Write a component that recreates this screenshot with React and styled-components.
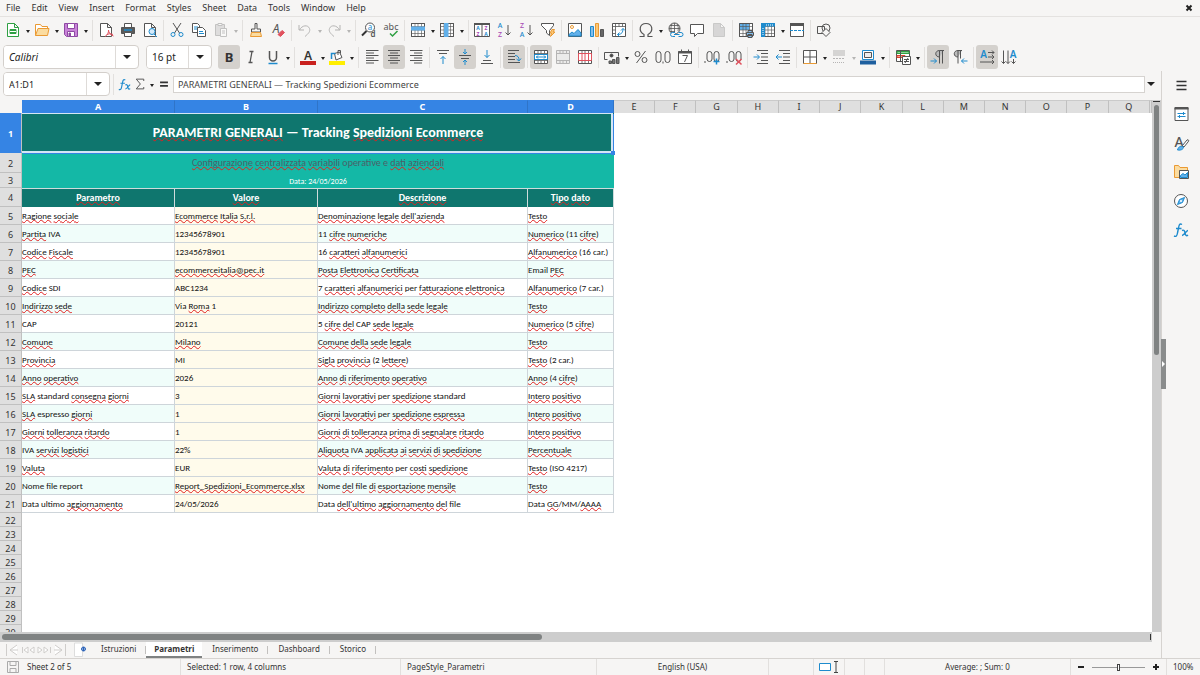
import React from "react";
import styled, { createGlobalStyle, css } from "styled-components";

const ui = '"Noto Sans", "Open Sans", sans-serif';
const cellFont = 'Carlito, Calibri, Lato, "Open Sans", sans-serif';
const BLUE = "#1e8bcd";
const INK = "#555";

const Global = createGlobalStyle`
  *, *::before, *::after { box-sizing: border-box; }
  html, body { margin: 0; }
  body { background: #f6f5f4; color: #333; font: 9px/12px ${ui}; }
  button, input { font: inherit; color: inherit; margin: 0; padding: 0; }
  button { background: none; border: 0; }
`;

const Shell = styled.div`
  display: flex;
  flex-direction: column;
  height: 100vh;
  overflow: hidden;
`;

/* ---------- menu bar ---------- */
const MenuBar = styled.nav`
  display: flex;
  align-items: center;
  flex: none;
  height: 17px;
  padding: 0 5px 0 6px;
  gap: 11px;
  border-bottom: 1px solid #e4e2e0;
`;
const MenuItem = styled.button`
  color: #333;
`;
const CloseButton = styled.button`
  display: flex;
  margin-left: auto;
`;

/* ---------- tool bars ---------- */
const ToolBar = styled.div`
  display: flex;
  align-items: center;
  flex: none;
  height: ${(p) => (p.$format ? 28 : 26)}px;
  padding-left: ${(p) => (p.$format ? 3 : 2)}px;
`;
const ToolButton = styled.button`
  display: flex;
  align-items: center;
  justify-content: center;
  flex: none;
  width: 22px;
  height: 24px;
  border-radius: 3px;
  color: ${INK};
  background: ${(p) => (p.$on ? "#d4d1cd" : "none")};
  opacity: ${(p) => (p.disabled ? 0.4 : 1)};
`;
const DropButton = styled.button`
  display: flex;
  align-items: center;
  justify-content: center;
  flex: none;
  width: ${(p) => p.$w || 7}px;
  height: 24px;
  opacity: ${(p) => (p.disabled ? 0.3 : 1)};
  &::after {
    content: "";
    margin-top: ${(p) => (p.$w ? 0 : 2)}px;
    border: ${(p) => (p.$w ? 4 : 2)}px solid transparent;
    border-top-color: #222;
    border-bottom: 0;
    ${(p) => !p.$w && css`border-top-width: 3px;`}
  }
`;
const Divider = styled.span`
  flex: none;
  width: 1px;
  height: 21px;
  margin: 0 2px;
  background: #e2e0de;
  ${DropButton} + & { margin-left: 3px; }
`;
const Combo = styled.div`
  display: flex;
  align-items: center;
  flex: none;
  width: ${(p) => p.$w}px;
  height: 24px;
  margin-right: ${(p) => p.$gap}px;
  background: #fff;
  border: 1px solid #d3cfcb;
  border-radius: 4px;
  overflow: hidden;
`;
const ComboInput = styled.input`
  flex: 1;
  min-width: 0;
  height: 22px;
  padding-left: 5px;
  border: 0;
  border-right: 1px solid #dedbd8;
  background: #fff;
  color: #222;
  font-size: ${(p) => p.$size || 10}px;
  font-style: ${(p) => (p.$italic ? "italic" : "normal")};
`;
const Svg = styled.svg`
  display: block;
  flex: none;
  overflow: visible;
`;

/* ---------- work area ---------- */
const Work = styled.div`
  display: flex;
  flex: 1;
  min-height: 0;
`;
const Main = styled.main`
  display: flex;
  flex-direction: column;
  flex: 1;
  min-width: 0;
`;
const FormulaBar = styled.div`
  display: flex;
  align-items: center;
  flex: none;
  height: 29px;
  padding: 0 4px 3px 3px;
`;
const SmallTool = styled(ToolButton)`
  width: ${(p) => p.$w}px;
`;
const FormulaInput = styled.input`
  flex: 1;
  min-width: 0;
  height: 17px;
  padding-left: 4px;
  border: 1px solid #d6d3d0;
  background: #fff;
  color: #444;
`;
const SheetArea = styled.div`
  display: flex;
  flex: 1;
  min-height: 0;
`;
const GridView = styled.div`
  flex: 1;
  min-width: 0;
  overflow: hidden;
  background: #fff;
`;
const Grid = styled.table`
  width: 100%;
  table-layout: fixed;
  border-collapse: separate;
  border-spacing: 0;
`;
const Col = styled.col`
  width: ${(p) => (p.$w ? p.$w + "px" : "auto")};
`;
const Corner = styled.td`
  background: #f6f5f4;
  padding: 0;
`;
const ColHead = styled.th`
  height: 13px;
  padding: 0;
  font-size: 9px;
  line-height: 12px;
  font-weight: ${(p) => (p.$on ? 700 : 400)};
  color: ${(p) => (p.$on ? "#fff" : "#333")};
  background: ${(p) => (p.$on ? "#3584e4" : "#dfdfdf")};
  border-right: 1px solid ${(p) => (p.$on ? "#2f74c8" : "#c0c0c0")};
  border-top: 1px solid ${(p) => (p.$on ? "#3584e4" : "#cacaca")};
`;
const RowHead = styled.th`
  height: ${(p) => p.$h}px;
  padding: 2px 0 0;
  font-size: 9px;
  line-height: 10px;
  font-weight: ${(p) => (p.$on ? 700 : 400)};
  color: ${(p) => (p.$on ? "#fff" : "#333")};
  background: ${(p) => (p.$on ? "#3584e4" : "#dfdfdf")};
  border-bottom: 1px solid ${(p) => (p.$on ? "#3584e4" : "#c0c0c0")};
  border-right: 1px solid #c0c0c0;
`;
const Banner = styled.td`
  position: relative;
  padding: 0;
  text-align: center;
  font-family: ${cellFont};
  color: ${(p) => p.$color || "#fff"};
  background: ${(p) => p.$bg};
  font-size: ${(p) => p.$size}px;
  line-height: 14px;
  font-weight: ${(p) => (p.$bold ? 700 : 400)};
`;
const Selection = styled.span`
  position: absolute;
  inset: 0 1px 0 0;
  border: 1px solid #d5e6f5;
  border-width: 1px 2px 2px 0;
  box-shadow: 1px 1px 0 #3584e4;
  z-index: 1;
  &::after {
    content: "";
    position: absolute;
    right: -4px;
    bottom: -4px;
    width: 4px;
    height: 4px;
    background: #3584e4;
  }
`;
const HeadCell = styled.td`
  padding: 0;
  text-align: center;
  font: 700 10px/12px ${cellFont};
  color: #fff;
  background: #0f766e;
  border-right: 1px solid #cfdcdc;
  border-top: 1px solid #cfdcdc;
`;
const Cell = styled.td`
  padding: 0;
  font: 9px/12px ${cellFont};
  color: #111;
  white-space: nowrap;
  background: ${(p) => (p.$input ? "#fffbeb" : p.$band ? "#f0fdfa" : "#fff")};
  border-right: 1px solid #ced5da;
  border-bottom: 1px solid #ced5da;
`;
const Blank = styled.td`
  padding: 0;
`;
const Spell = styled.span`
  text-decoration: underline wavy #e02020 1px;
  text-decoration-skip-ink: none;
  text-underline-offset: 0;
`;
const VScroll = styled.div`
  display: flex;
  flex-direction: column;
  align-items: center;
  flex: none;
  width: 9px;
  background: #cdcdcd;
  border-top: 1px solid #cdcdcd;
  &::before {
    content: "";
    width: 7px;
    height: 1px;
    margin-bottom: 3px;
    background: #333;
  }
`;
const VThumb = styled.span`
  width: 5px;
  height: 47%;
  border-radius: 3px;
  background: #7f8282;
`;
const HScroll = styled.div`
  display: flex;
  align-items: center;
  justify-content: space-between;
  flex: none;
  height: 10px;
  margin-right: 9px;
  padding: 0 1px 0 2px;
  background: #cdcdcd;
  &::after {
    content: "";
    width: 1px;
    height: 6px;
    background: #333;
  }
`;
const HThumb = styled.span`
  width: 47%;
  height: 6px;
  border-radius: 3px;
  background: #7f8282;
`;

/* ---------- sheet tabs ---------- */
const Tabs = styled.nav`
  display: flex;
  flex: none;
  height: 16px;
`;
const TabTools = styled.div`
  display: flex;
  align-items: center;
  justify-content: space-between;
  width: 91px;
  padding: 0 0 0 6px;
`;
const AddSheet = styled(ToolButton)`
  height: 16px;
`;
const Tab = styled.button`
  position: relative;
  padding: 0 10px;
  height: 16px;
  font-size: 8px;
  line-height: 14px;
  font-weight: ${(p) => (p.$on ? 700 : 400)};
  background: ${(p) => (p.$on ? "#fff" : "none")};
  border-bottom: 2px solid ${(p) => (p.$on ? "#7f8282" : "transparent")};
  ${(p) => p.$on && css`padding: 0 8px;`}
  &::after {
    content: "";
    position: absolute;
    right: 0;
    top: 4px;
    width: 1px;
    height: 8px;
    background: ${(p) => (p.$on ? "none" : "#c2c0be")};
  }
`;

/* ---------- side bar ---------- */
const SideBar = styled.aside`
  position: relative;
  display: flex;
  flex-direction: column;
  align-items: center;
  flex: none;
  width: 39px;
  padding-top: 2px;
  gap: 5px;
  border-left: 1px solid #d6d3d0;
`;
const Splitter = styled.button`
  position: absolute;
  left: -1px;
  top: calc(50% - 26px);
  display: flex;
  align-items: center;
  width: 5px;
  height: 50px;
  background: #8a8c8c;
  &::after {
    content: "";
    border: 3px solid transparent;
    border-left: 3px solid #fff;
    border-right: 0;
    margin-left: 1px;
  }
`;

/* ---------- status bar ---------- */
const StatusBar = styled.footer`
  display: grid;
  grid-template-columns:
    minmax(0, 181fr) minmax(0, 220fr) minmax(0, 196fr) minmax(0, 172fr) minmax(0, 45fr) minmax(0, 31fr)
    minmax(0, 20fr) minmax(0, 20fr) minmax(0, 186fr) minmax(0, 96fr) minmax(0, 33fr);
  flex: none;
  height: 17px;
  border-top: 1px solid #d6d3d0;
  font-size: 8px;
`;
const Status = styled.div`
  display: flex;
  align-items: center;
  justify-content: ${(p) => (p.$center ? "center" : "flex-start")};
  min-width: 0;
  gap: 7px;
  padding: 0 6px;
  border-right: 1px solid #e2e0de;
  white-space: nowrap;
  &:last-child { border: 0; }
`;
const Zoom = styled.input`
  appearance: none;
  flex: 1;
  min-width: 0;
  height: 10px;
  background: linear-gradient(#999, #999) center / 100% 1px no-repeat;
  &::-webkit-slider-thumb {
    appearance: none;
    width: 3px;
    height: 7px;
    border: 1px solid #444;
    background: #fff;
  }
`;

/* ---------- drawings ---------- */
const lines = (ys, x1 = 1.5, x2 = 14.5) => ys.map((y, i) => <path key={i} d={`M${x1} ${y}H${x2}`} />);
const sheetPath = "M2.5 1.5h7l4 4v9h-11zM9.5 1.5v4h4";
const gridInner = "M1.5 4.5h13M1.5 8h13M1.5 11.5h13M5 1.5v13M8 1.5v13M11.5 1.5v13";
const Lattice = () => (
  <g>
    <path strokeWidth=".8" opacity=".8" d={gridInner} />
    <path d="M1.5 1.5h13v13h-13z" />
  </g>
);
const T = ({ x, y, s = 9, f = "currentColor", w = 400, children, ...r }) => (
  <text x={x} y={y} fontSize={s} fontWeight={w} fill={f} stroke="none" textAnchor="middle" fontFamily={ui} {...r}>
    {children}
  </text>
);

const art = {
  new: (
    <g stroke="#2fa043">
      <path fill="#fff" d={sheetPath} />
      <path fill="#2fa043" d="M5 7.5h6v4H5z" />
      <path stroke="#fff" d="M5 9.5h6" />
    </g>
  ),
  open: (
    <g stroke="#ea9a33">
      <path fill="#fff" d="M1.5 13.5v-11h5l1.500 2h5.500v2" />
      <path fill="#fbdca0" d="M1.500 13.500l2.500-7h11l-1.500 7z" />
    </g>
  ),
  save: (
    <g stroke="#8e49a3">
      <path fill="#c983d8" d="M1.500 1.500h13v13h-11l-2-2z" />
      <path fill="#fff" d="M4.500 1.500h7v5h-7z" />
      <path fill="#fff" d="M4.500 9.500h7v5h-7z" />
      <path fill="#8e49a3" d="M6 11h1.500v3.500H6z" />
    </g>
  ),
  pdf: (
    <g>
      <path fill="#fff" d={sheetPath} />
      <path stroke="#e0525e" d="M7 14.500c2-1 4-4 3.500-6.500 0 2.500 2 5 5 6M8.500 13c2-1.500 4-1.500 6.500-.500" />
    </g>
  ),
  print: (
    <g>
      <path fill="#fff" d="M4.500 5v-3.500h7V5" />
      <path fill="#5a5a5a" d="M1.500 5.500h13v6h-13z" />
      <path stroke={BLUE} strokeWidth="1.500" d="M4 8h8" />
      <path fill="#fff" d="M4.500 10.500h7v4h-7z" />
    </g>
  ),
  preview: (
    <g>
      <path fill="#fff" d={sheetPath} />
      <circle cx="10" cy="9.500" r="3" fill="#d5eafa" stroke={BLUE} />
      <path stroke={BLUE} d="M12 12l3 3" />
    </g>
  ),
  cut: (
    <g>
      <path d="M4 1l6.500 10M12 1L5.500 11" />
      <circle cx="4" cy="12.500" r="2" stroke={BLUE} />
      <circle cx="12" cy="12.500" r="2" stroke={BLUE} />
    </g>
  ),
  copy: (
    <g>
      <path fill="#fff" d="M1.500 1.500h5l2 2v7h-7z" />
      <path stroke={BLUE} d="M3 5h4M3 7h4" />
      <path fill="#fff" d="M6.500 5.500h5l3 3v6h-8z" />
      <path stroke={BLUE} d="M8 9.500h4M8 11.500h5" />
    </g>
  ),
  paste: (
    <g stroke="#777">
      <path fill="#bbb" d="M2.500 2.500h9v11h-9z" />
      <path fill="#fff" d="M5 1.500h4v2H5zM7.500 6.500h6v8h-6z" />
      <path d="M9 9h3M9 11h3" />
    </g>
  ),
  clone: (
    <g>
      <path d="M7 1.500h2v5.500h3.500v3h-9V7H7z" />
      <path stroke="#ea9a33" fill="#fbdca0" d="M3.500 10.500h9l1 4h-11z" />
    </g>
  ),
  clear: (
    <g>
      <T x={6} y={11} s={12} fontStyle="italic">A</T>
      <path stroke="#e0525e" fill="#e0525e" d="M8 12.500l4-4 2.500 2-4 4z" />
    </g>
  ),
  undo: <path d="M2 3v5h5M2.500 8C5 3 11 2.500 12.500 6.500c1 3-1 5-4.500 8" />,
  redo: <path d="M14 3v5H9M13.500 8C11 3 5 2.500 3.500 6.500c-1 3 1 5 4.500 8" />,
  find: (
    <g>
      <circle cx="9" cy="5.500" r="4.500" fill="#fff" />
      <path stroke="#333" strokeWidth="2" d="M5.500 9L1 13.500" />
      <T x={9} y={8} s={8} f={BLUE}>a</T>
      <T x={12} y={15} s={8} w={600}>d</T>
    </g>
  ),
  spell: (
    <g>
      <T x={8} y={7.500} s={9}>abc</T>
      <path stroke="#2fa043" strokeWidth="1.500" d="M7 11.500l2.500 2.500 5-5" />
    </g>
  ),
  row: (
    <g>
      <path fill="#fff" d="M1.500 1.500h13v13h-13z" />
      <Lattice />
      <path stroke="none" fill="#62b0ea" d="M1 4.500h14v4H1z" />
    </g>
  ),
  column: (
    <g>
      <path fill="#fff" d="M1.500 1.500h13v13h-13z" />
      <Lattice />
      <path stroke="none" fill="#62b0ea" d="M5 1h4.500v14H5z" />
    </g>
  ),
  sort: (
    <g>
      <path fill="#fff" d="M.5 1.500h15v13H.500zM8 1.500v13" />
      <path strokeWidth="2" d="M0 2h16" />
      <T x={4} y={8} s={5} w={700} f={BLUE}>A</T>
      <T x={4} y={14} s={5} w={700} f="#a74bb5">Z</T>
      <T x={12} y={8} s={5} w={700} f="#a74bb5">Z</T>
      <T x={12} y={14} s={5} w={700} f={BLUE}>A</T>
    </g>
  ),
  sortUp: (
    <g>
      <T x={4} y={6} s={7} w={500} f={BLUE}>A</T>
      <T x={4} y={15} s={7} w={500} f="#a74bb5">Z</T>
      <path d="M12 3v10M9.500 10.500l2.500 2.500 2.500-2.500" />
    </g>
  ),
  sortDown: (
    <g>
      <T x={4} y={6} s={7} w={500} f="#a74bb5">Z</T>
      <T x={4} y={15} s={7} w={500} f={BLUE}>A</T>
      <path d="M12 3v10M9.500 10.500l2.500 2.500 2.500-2.500" />
    </g>
  ),
  filter: (
    <g>
      <path fill="#fff" d="M1.500 1.500h12v2L9.500 8.500v5l-3-2.500V8.500l-5-5z" />
      <path stroke="#ea9a33" fill="#fbc878" d="M12 7.500h2.500l-1.500 2.500h2l-4.500 4.500 1-3.500h-1.500z" />
    </g>
  ),
  image: (
    <g>
      <path fill="#fff" d="M1.500 1.500h13v13h-13z" />
      <circle cx="5" cy="5" r="1.500" stroke="#ea9a33" />
      <path stroke={BLUE} fill="#62b0ea" d="M2 12.500l3-2.500 2 1.500 4-4 3 3.500v3H2z" />
    </g>
  ),
  chart: (
    <g>
      <path stroke={BLUE} fill="#83beec" d="M1.500 4.500h3v10h-3z" />
      <path stroke="#ea9a33" fill="#fbc878" d="M6.500 1.500h3v13h-3z" />
      <path fill="#666" d="M11.500 7.500h3v7h-3z" />
    </g>
  ),
  pivot: (
    <g>
      <path fill="#fff" d="M1.500 1.500h13v13h-13z" />
      <path strokeWidth=".8" d="M1.500 4.500h13M4.500 1.500v13M8 1.500v3M11.500 1.500v3M1.500 8h3M1.500 11.500h3" />
      <path stroke={BLUE} d="M6.500 12.500C11 12.500 12 10 12 6.500M8.500 10.500l-2 2 2 2M10 8.500l2-2 2 2" />
    </g>
  ),
  omega: <path strokeWidth="1.200" d="M1.500 14.500h4.500v-2C0 9 1.500 1.500 8 1.500S16 9 10 12.500v2h4.500" />,
  link: (
    <g>
      <circle cx="7.500" cy="6.500" r="5.500" />
      <path strokeWidth=".8" d="M2 6.500h11M7.500 1v11M3 3.500h9M3 9.500h5M5 2c-1.500 3-1.500 6 0 9M10 2c1.500 2 1.500 5 1 7" />
      <path stroke={BLUE} fill="#f6f5f4" d="M8 10.500H5.500a2 2 0 0 0 0 4H8M11.500 10.500H14a2 2 0 0 1 0 4h-2.500M7 12.500h5.500" />
    </g>
  ),
  comment: <path fill="#fff" d="M1.500 2.500h13v9h-6l-3 3v-3h-4z" />,
  page: <path fill="#aaa" stroke="#888" d={sheetPath} />,
  printArea: (
    <g>
      <path fill="#fff" d="M1.500 1.500h13v13h-13z" />
      <path stroke="none" fill="#62b0ea" d="M1 1h10.500v7H1z" />
      <Lattice />
      <path fill="#83beec" d="M8.500 10.500h7v3h-7zM10 8.500h4v2h-4zM10 12.500h4v3h-4z" />
    </g>
  ),
  freeze: (
    <g>
      <path fill="#fff" d="M1.500 1.500h13v13h-13z" />
      <Lattice />
      <path stroke="none" fill={BLUE} d="M1 1h4v14H1zM1 1h14v3.500H1z" />
      <path stroke="#fff" d="M3 6v8M6 3h8" strokeDasharray="1 1" />
    </g>
  ),
  split: (
    <g>
      <path fill="#fff" d="M1.500 1.500h13v13h-13z" />
      <path strokeWidth="3" d="M1 2.500h14" />
      <path stroke={BLUE} strokeDasharray="3 1" d="M1 8.500h14" />
    </g>
  ),
  shapes: (
    <g>
      <path d="M1.500 4.500h7v7h-7z" />
      <circle cx="10" cy="6" r="4" />
      <path fill="#f6f5f4" d="M10 6.500l4 4-4 4-4-4z" />
    </g>
  ),
  bold: <T x={8} y={12.500} s={13} w={700} f="#333">B</T>,
  italic: <path strokeWidth="1.300" d="M6.500 2.500h4M5.500 13.500h4M9 2.500l-2 11" />,
  underline: (
    <g>
      <path strokeWidth="1.500" d="M4.500 2v6.500a3.500 3.500 0 0 0 7 0V2" />
      <path stroke={BLUE} strokeWidth="1.500" d="M3.500 14.500h9" />
    </g>
  ),
  fontColor: (
    <g>
      <T x={8} y={11} s={12} w={600} f="#333">A</T>
      <path stroke="#c9211e" strokeWidth="4" d="M0 14h16" />
    </g>
  ),
  highlight: (
    <g>
      <path fill="#fff" d="M5.500 4.500l5-1.500 2.500 5.500-6 2.500z" />
      <path stroke={BLUE} strokeWidth="1.500" d="M2.500 10V4.500h4" />
      <path d="M9 6V1.500h2.500v3" />
      <path stroke="#ffee00" strokeWidth="4" d="M0 14h16" />
    </g>
  ),
  left: <g>{lines([1.5, 6.5, 11.5], 2)}{lines([4, 9, 14], 2, 10)}</g>,
  center: <g>{lines([1.5, 6.5, 11.5], 2, 14)}{lines([4, 9, 14], 4, 12)}</g>,
  right: <g>{lines([1.5, 6.5, 11.5], 2)}{lines([4, 9, 14], 6, 14)}</g>,
  top: (
    <g>
      <path d="M2 1.500h12M4 4.500h8" />
      <path stroke={BLUE} d="M8 15V7.500M5.500 10L8 7.500l2.500 2.500" />
    </g>
  ),
  middle: (
    <g>
      <path d="M2 6.500h12M4 9.500h8" />
      <path stroke={BLUE} d="M8 0v5M6 3l2 2 2-2M8 16v-5M6 13l2-2 2 2" />
    </g>
  ),
  bottom: (
    <g>
      <path d="M4 11.500h8M2 14.500h12" />
      <path stroke={BLUE} d="M8 1v7.500M5.500 6L8 8.500 10.500 6" />
    </g>
  ),
  wrap: (
    <g>
      <path d="M2 1.500h11M2 4.500h7M2 7.500h7M2 10.500h7M2 13.500h12" />
      <path stroke={BLUE} d="M9 6.500c3 0 4 2 4 4.500M10.500 10l2.500 2 2-2.500" />
    </g>
  ),
  merge: (
    <g>
      <path fill="#fff" d="M1.500 1.500h13v13h-13z" />
      <path strokeWidth=".8" d="M1.500 4.500h13M1.500 11.500h13M5 1.500v3M8 1.500v3M11.500 1.500v3M5 11.500v3M8 11.500v3M11.500 11.500v3" />
      <path stroke={BLUE} d="M1.500 5.500h13v5h-13zM3 8h10M5 6.500L3.500 8 5 9.500M11 6.500L12.500 8 11 9.500" />
    </g>
  ),
  mergeOff: <g><path fill="#ddd" d="M1.500 1.500h13v13h-13z" /><path d="M1.500 4.500h13M1.500 11.500h13M5 1.500v3M8 1.500v3M11.500 1.500v3M5 11.500v3M8 11.500v3M11.500 11.500v3" /></g>,
  splitCells: (
    <g>
      <path fill="#fff" d="M1.500 1.500h13v13h-13z" />
      <path strokeWidth=".8" d="M5 1.500v3M8 1.500v3M11.500 1.500v3M5 11.500v3M8 11.500v3M11.500 11.500v3" />
      <path stroke="#e0525e" d="M1.500 4.500h13v7h-13zM5 4.500v7M8 4.500v7M11.500 4.500v7" />
    </g>
  ),
  currency: (
    <g>
      <path d="M3.500 10.500h-3v-7h14v4" />
      <circle cx="7.500" cy="6.500" r="1.500" fill="#444" />
      <path fill="#777" d="M5 12h2.500v2.500H5zM8.500 10.500h2.500v4H8.500zM12.500 8.500h2.500v6h-2.500z" />
    </g>
  ),
  percent: (
    <g>
      <circle cx="4.500" cy="5" r="2.500" />
      <circle cx="11.500" cy="11" r="2.500" />
      <path d="M12.500 2L3.500 14" />
    </g>
  ),
  number: (
    <g>
      <rect x="1" y="2.500" width="5" height="11" rx="2.500" />
      <rect x="10" y="2.500" width="5" height="11" rx="2.500" />
      <path d="M8 12.500v2" />
    </g>
  ),
  date: (
    <g>
      <path fill="#fff" d="M1.500 2.500h13v12h-13z" />
      <path strokeWidth="2" d="M1 3.500h14" />
      <path d="M4.500.5v2M11.500.5v2M5.500 6.500h5L7.500 13" />
    </g>
  ),
  decAdd: (
    <g>
      <path d="M1 12v2" />
      <rect x="3" y="2.500" width="5" height="10" rx="2.500" />
      <rect x="10" y="2.500" width="5" height="10" rx="2.500" />
      <path stroke={BLUE} strokeWidth="1.500" d="M12.500 9.500v6M9.500 12.500h6" />
    </g>
  ),
  decDel: (
    <g>
      <path d="M1 12v2" />
      <rect x="3" y="2.500" width="5" height="10" rx="2.500" />
      <rect x="10" y="2.500" width="5" height="10" rx="2.500" />
      <path stroke="#e0525e" strokeWidth="1.500" d="M10 10l5.500 5.500M15.500 10L10 15.500" />
    </g>
  ),
  indent: (
    <g>
      <path d="M4 1.500h11M8 4.500h7M8 8h7M8 11.500h7M4 14.500h11" />
      <path stroke={BLUE} d="M.5 8H6M4 5.500L6.500 8 4 10.500" />
    </g>
  ),
  outdent: (
    <g>
      <path d="M4 1.500h11M8 4.500h7M8 8h7M8 11.500h7M4 14.500h11" />
      <path stroke={BLUE} d="M7 8H1M3.500 5.500L1 8l2.500 2.500" />
    </g>
  ),
  borders: (
    <g>
      <path fill="#fff" d="M1.500 1.500h13v13h-13z" />
      <path d="M8 1.500v13M1.500 8h13" />
      <path stroke="#ea9a33" d="M1.500 14.500h13" />
    </g>
  ),
  lineStyle: (
    <g>
      <path d="M2 2h12M2 6h12M2 4h12" />
      <path strokeDasharray="2 1" d="M2 9.500h12" />
      <path strokeDasharray="1 1" d="M2 13.500h12" />
    </g>
  ),
  borderColor: (
    <g>
      <path stroke={BLUE} fill="#fff" d="M2.500 1.500h11v9h-11z" />
      <path fill="#eee" d="M4.500 3.500h7v5h-7z" />
      <path stroke="#1e5f9f" strokeWidth="4" d="M0 13.500h16" />
    </g>
  ),
  conditional: (
    <g>
      <path fill="#fff" d="M1.500 1.500h13v11h-13z" />
      <path stroke="#2fa043" fill="#8ed09a" d="M2 2.500h12v2H2z" />
      <path stroke="#d9432f" fill="#f2998d" d="M2 6.500h8v2H2z" />
      <path d="M5.500 1.500v11" />
      <path fill="#fff" d="M7.500 7.500h8v8h-8zM9 10.500h5M9 12.500h5M13 9l-3 5" />
    </g>
  ),
  ltr: (
    <g>
      <path fill="#bbb" d="M9.500 8c-5 0-5-6.500 0-6.500H14M9.500 1.500v13M12.500 1.500v13" />
      <path stroke={BLUE} d="M.5 12h6M4 9.500L6.500 12 4 14.500" />
    </g>
  ),
  rtl: (
    <g>
      <path fill="#bbb" d="M6 8c-5 0-5-6.500 0-6.500h4M6 1.500v13M8.500 1.500v8" />
      <path stroke={BLUE} d="M15.500 12h-6M12 9.500L9.500 12l2.500 2.500" />
    </g>
  ),
  textH: (
    <g>
      <T x={4.500} y={9} s={10} f={BLUE} w={600}>A</T>
      <path d="M9 3.500h6M13 1.500l2 2-2 2M9 8h6M13 6l2 2-2 2M1 13h14M13 11l2 2-2 2" />
    </g>
  ),
  textV: (
    <g>
      <path d="M2.500 1.500v13M.5 12.500l2 2 2-2M7 1.500v13M5 12.500l2 2 2-2M12.500 10v4.500M10.500 12.500l2 2 2-2" />
      <T x={12} y={9} s={10} f={BLUE} w={600}>A</T>
    </g>
  ),
  fx: (
    <g stroke={BLUE} strokeWidth="1.400">
      <path d="M9 2.500C6.500 1 6 3 5.500 6l-1 5c-.5 3-1.500 4-3.500 3M3 6.500h5.500" />
      <path d="M9 8.500c2-1 2.500 0 3 2.500s1.500 3.500 3 2M15 8.500c-2 0-3.500 5-6 5" />
    </g>
  ),
  sigma: <path strokeWidth="1.300" d="M13 4V1.500H3L8.500 8 3 14.500h10V12" />,
  equals: <path stroke="#333" strokeWidth="2" d="M3.500 6h9M3.500 10h9" />,
  burger: <path stroke="#333" strokeWidth="1.500" d="M3.500 4.500h10M3.500 8.500h10M3.500 12.500h10" />,
  props: (
    <g>
      <path fill="#fff" d="M2 1.500h13v13H2z" />
      <path strokeWidth="2" d="M1.500 2.500h14" />
      <path stroke={BLUE} d="M4.500 7.500h8M4.500 10.500h8M10.500 6v3M6.500 9v3" />
    </g>
  ),
  styles: (
    <g>
      <T x={6} y={12} s={14} w={500}>A</T>
      <path fill="#fff" d="M9.500 10.500L14 5c2-1 2 1 1 2l-4 5z" />
      <path stroke={BLUE} fill="#62b0ea" d="M4.500 15c1-4 4-4.500 6-3 0 2.500-3 3.500-6 3z" />
    </g>
  ),
  gallery: (
    <g>
      <path stroke="#ea9a33" fill="#fbdca0" d="M1.500 13.500v-12h4l1.500 2h7.500v3h-8v7z" />
      <path fill="#fff" d="M6.500 6.500h9v8h-9z" />
      <path stroke={BLUE} fill="#62b0ea" d="M7.500 13.500v-2l2.500-2 2 1.500 2.500-2.500v5z" />
    </g>
  ),
  navigator: (
    <g>
      <circle cx="8" cy="8" r="6.500" fill="#fff" />
      <path stroke={BLUE} fill="#62b0ea" d="M11.500 4.500l-2 5-5 2 2-5z" />
      <circle cx="8" cy="8" r="1" fill="#fff" stroke="none" />
    </g>
  ),
};

const Icon = ({ name, size = 16 }) => (
  <Svg width={size} height={size} viewBox="0 0 16 16" fill="none" stroke="currentColor" aria-hidden="true">
    {art[name]}
  </Svg>
);

/* flags after the colon: "v" adds a drop-down arrow, "!" marks a pressed tool, "-" a disabled one; "|" is a divider */
const standardTools =
  "new:v open:v save:v | pdf print preview | cut copy paste:-v | clone clear | undo:-v redo:-v | find spell | row:v column:v | sort sortUp sortDown filter | image chart pivot | omega:v link comment page:- | printArea freeze:v split | shapes";
const formatTools =
  "bold:! italic underline:v | fontColor:v highlight:v | left center:! right | top middle:! bottom | wrap:! | merge:! mergeOff:- splitCells | currency:v percent number date | decAdd decDel | indent outdent | borders:v lineStyle:-v borderColor:v | conditional:v | ltr:! rtl | textH:! textV";

const Tools = ({ list }) =>
  list.split(" ").map((item, i) => {
    if (item === "|") return <Divider key={i} />;
    const [name, flags = ""] = item.split(":");
    const off = flags.includes("-");
    return (
      <React.Fragment key={i}>
        <ToolButton aria-label={name} $on={flags.includes("!")} disabled={off}>
          <Icon name={name} />
        </ToolButton>
        {flags.includes("v") && <DropButton aria-label={`${name} options`} disabled={off} />}
      </React.Fragment>
    );
  });

/* words in braces carry the spelling mark */
const Marked = ({ text }) =>
  text.split(/(\{[^}]+\})/).map((part, i) => (part[0] === "{" ? <Spell key={i}>{part.slice(1, -1)}</Spell> : part));

const rows = [
  ["{Ragione} {sociale}", "{Ecommerce} {Italia} {S.r.l.}", "{Denominazione} {legale} {dell'azienda}", "{Testo}"],
  ["{Partita} IVA", "12345678901", "11 {cifre} {numeriche}", "{Numerico} (11 {cifre})"],
  ["{Codice} {Fiscale}", "12345678901", "16 {caratteri} {alfanumerici}", "{Alfanumerico} (16 car.)"],
  ["{PEC}", "{ecommerceitalia@pec.it}", "{Posta} {Elettronica} {Certificata}", "Email {PEC}"],
  ["{Codice} SDI", "ABC1234", "7 {caratteri} {alfanumerici} per {fatturazione} {elettronica}", "{Alfanumerico} (7 car.)"],
  ["{Indirizzo} {sede}", "Via {Roma} 1", "{Indirizzo} {completo} {della} {sede} {legale}", "{Testo}"],
  ["CAP", "20121", "5 {cifre} {del} CAP {sede} {legale}", "{Numerico} (5 {cifre})"],
  ["{Comune}", "{Milano}", "{Comune} {della} {sede} {legale}", "{Testo}"],
  ["{Provincia}", "MI", "{Sigla} {provincia} (2 {lettere})", "{Testo} (2 car.)"],
  ["{Anno} {operativo}", "2026", "{Anno} {di} {riferimento} {operativo}", "{Anno} (4 {cifre})"],
  ["{SLA} standard {consegna} {giorni}", "3", "{Giorni} {lavorativi} per {spedizione} standard", "{Intero} {positivo}"],
  ["{SLA} espresso {giorni}", "1", "{Giorni} {lavorativi} per {spedizione} {espressa}", "{Intero} {positivo}"],
  ["{Giorni} {tolleranza} {ritardo}", "1", "{Giorni} {di} {tolleranza} {prima} {di} {segnalare} {ritardo}", "{Intero} {positivo}"],
  ["IVA {servizi} {logistici}", "22%", "{Aliquota} IVA {applicata} {ai} {servizi} {di} {spedizione}", "{Percentuale}"],
  ["{Valuta}", "EUR", "{Valuta} {di} {riferimento} per {costi} {spedizione}", "{Testo} (ISO 4217)"],
  ["Nome file report", "{Report_Spedizioni_Ecommerce.xlsx}", "Nome {del} file {di} {esportazione} {mensile}", "{Testo}"],
  ["Data ultimo {aggiornamento}", "24/05/2026", "Data {dell'ultimo} {aggiornamento} {del} file", "Data {GG}/MM/{AAAA}"],
];
const columns = "ABCDEFGHIJKLMNOPQ".split("");
const widths = [22, 153, 143, 210, 86, ...Array(13).fill(0), 2];

const Sheet = () => (
  <Grid>
    <colgroup>{widths.map((w, i) => <Col key={i} $w={w} />)}</colgroup>
    <thead>
      <tr>
        <Corner />
        {columns.map((c, i) => <ColHead key={c} scope="col" $on={i < 4}>{c}</ColHead>)}
        <ColHead as="td" />
      </tr>
    </thead>
    <tbody>
      <tr>
        <RowHead scope="row" $h={40} $on>1</RowHead>
        <Banner colSpan={4} $bg="#0f766e" $size={14} $bold>
          <Marked text="{PARAMETRI} {GENERALI} — Tracking {Spedizioni} {Ecommerce}" />
          <Selection />
        </Banner>
        <Blank colSpan={14} />
      </tr>
      <tr>
        <RowHead scope="row" $h={20}>2</RowHead>
        <Banner colSpan={4} $bg="#14b8a6" $size={10} $color="#4b6068">
          <Marked text="{Configurazione} {centralizzata} {variabili} operative e {dati} {aziendali}" />
        </Banner>
        <Blank colSpan={14} />
      </tr>
      <tr>
        <RowHead scope="row" $h={15}>3</RowHead>
        <Banner colSpan={4} $bg="#14b8a6" $size={8}>Data: 24/05/2026</Banner>
        <Blank colSpan={14} />
      </tr>
      <tr>
        <RowHead scope="row" $h={19}>4</RowHead>
        {["{Parametro}", "{Valore}", "{Descrizione}", "{Tipo} {dato}"].map((t) => (
          <HeadCell key={t}><Marked text={t} /></HeadCell>
        ))}
        <Blank colSpan={14} />
      </tr>
      {rows.map((row, r) => (
        <tr key={r}>
          <RowHead scope="row" $h={18}>{r + 5}</RowHead>
          {row.map((text, c) => (
            <Cell key={c} $input={c === 1} $band={r % 2 === 1}>
              <Marked text={text} />
            </Cell>
          ))}
          <Blank colSpan={14} />
        </tr>
      ))}
      {Array.from({ length: 9 }, (_, i) => (
        <tr key={i}>
          <RowHead scope="row" $h={14}>{i + 22}</RowHead>
          <Blank colSpan={18} />
        </tr>
      ))}
    </tbody>
  </Grid>
);

export default function App() {
  return (
    <Shell>
      <Global />
      <MenuBar>
        {["File", "Edit", "View", "Insert", "Format", "Styles", "Sheet", "Data", "Tools", "Window", "Help"].map((m) => (
          <MenuItem key={m}>{m}</MenuItem>
        ))}
        <CloseButton aria-label="Close document">
          <Svg width="12" height="8" viewBox="0 0 12 8" stroke="#222" strokeWidth="2">
            <path d="M3.500 1.500l5 5M8.500 1.500l-5 5" />
          </Svg>
        </CloseButton>
      </MenuBar>
      <ToolBar>
        <Tools list={standardTools} />
      </ToolBar>
      <ToolBar $format>
        <Combo $w={136} $gap={7}>
          <ComboInput aria-label="Font name" defaultValue="Calibri" $italic />
          <DropButton aria-label="Font list" $w={22} />
        </Combo>
        <Combo $w={66} $gap={6}>
          <ComboInput aria-label="Font size" defaultValue="16 pt" />
          <DropButton aria-label="Size list" $w={22} />
        </Combo>
        <Tools list={formatTools} />
      </ToolBar>
      <Work>
        <Main>
          <FormulaBar>
            <Combo $w={107} $gap={1}>
              <ComboInput aria-label="Name box" defaultValue="A1:D1" $size={9} />
              <DropButton aria-label="Named ranges" $w={22} />
            </Combo>
            <Divider />
            <SmallTool aria-label="Function wizard" $w={16}><Icon name="fx" size={13} /></SmallTool>
            <SmallTool aria-label="Select function" $w={16}><Icon name="sigma" size={12} /></SmallTool>
            <DropButton aria-label="Function list" />
            <SmallTool aria-label="Formula" $w={18}><Icon name="equals" size={14} /></SmallTool>
            <FormulaInput aria-label="Formula input" defaultValue="PARAMETRI GENERALI — Tracking Spedizioni Ecommerce" />
            <DropButton aria-label="Expand formula bar" $w={12} />
          </FormulaBar>
          <SheetArea>
            <GridView><Sheet /></GridView>
            <VScroll><VThumb /></VScroll>
          </SheetArea>
          <HScroll><HThumb /></HScroll>
          <Tabs>
            <TabTools>
              <Svg width="60" height="12" viewBox="0 0 60 12" fill="#fff" stroke="#cfcdcb">
                <path d="M.5 0v12M11 1L4 6l7 5M4 6h8M16.500 3v6M22 3l-4 3 4 3zM28 3l-4 3 4 3zM32 3l4 3-4 3zM38 3l4 3-4 3zM44.500 3v6M49 1l7 5-7 5M48 6h8M59.500 0v12" />
              </Svg>
              <AddSheet aria-label="Add sheet">
                <Svg width="14" height="14" viewBox="0 0 14 14">
                  <path fill="#fff" stroke="#ddd" d="M1.500 0h8v13.500h-8z" />
                  <circle cx="10.500" cy="6" r="2" fill="#fff" stroke="#2a62b8" />
                  <path stroke="#2a62b8" d="M10.500 4v4M8.500 6h4" />
                </Svg>
              </AddSheet>
            </TabTools>
            {["Istruzioni", "Parametri", "Inserimento", "Dashboard", "Storico"].map((t, i) => (
              <Tab key={t} $on={i === 1}>{t}</Tab>
            ))}
          </Tabs>
        </Main>
        <SideBar>
          {["burger", "props", "styles", "gallery", "navigator", "fx"].map((n) => (
            <ToolButton key={n} aria-label={n}><Icon name={n} /></ToolButton>
          ))}
          <Splitter aria-label="Collapse side bar" />
        </SideBar>
      </Work>
      <StatusBar>
        <Status>
          <Svg width="14" height="12" viewBox="0 0 14 12" fill="none" stroke="#aaa">
            <path d="M1.500.5h11v11h-11zM4 .5v4h6v-4M4 11.500v-4h6v4" />
          </Svg>
          Sheet 2 of 5
        </Status>
        <Status>Selected: 1 row, 4 columns</Status>
        <Status>PageStyle_Parametri</Status>
        <Status $center>English (USA)</Status>
        <Status />
        <Status $center>
          <Svg width="20" height="12" viewBox="0 0 20 12" fill="none">
            <path stroke={BLUE} fill="#fff" d="M.5 2.500h11v7H.500z" />
            <path stroke="#444" d="M15 .5h4M15 11.500h4M17 .5v11" />
          </Svg>
        </Status>
        <Status />
        <Status />
        <Status $center>Average: ; Sum: 0</Status>
        <Status>
          <Svg width="8" height="8" viewBox="0 0 8 8" stroke="#222" strokeWidth="2"><path d="M1 4h6" /></Svg>
          <Zoom type="range" aria-label="Zoom" min="0" max="100" defaultValue="49" />
          <Svg width="8" height="8" viewBox="0 0 8 8" stroke="#222" strokeWidth="2"><path d="M1 4h6M4 1v6" /></Svg>
        </Status>
        <Status>100%</Status>
      </StatusBar>
    </Shell>
  );
}
